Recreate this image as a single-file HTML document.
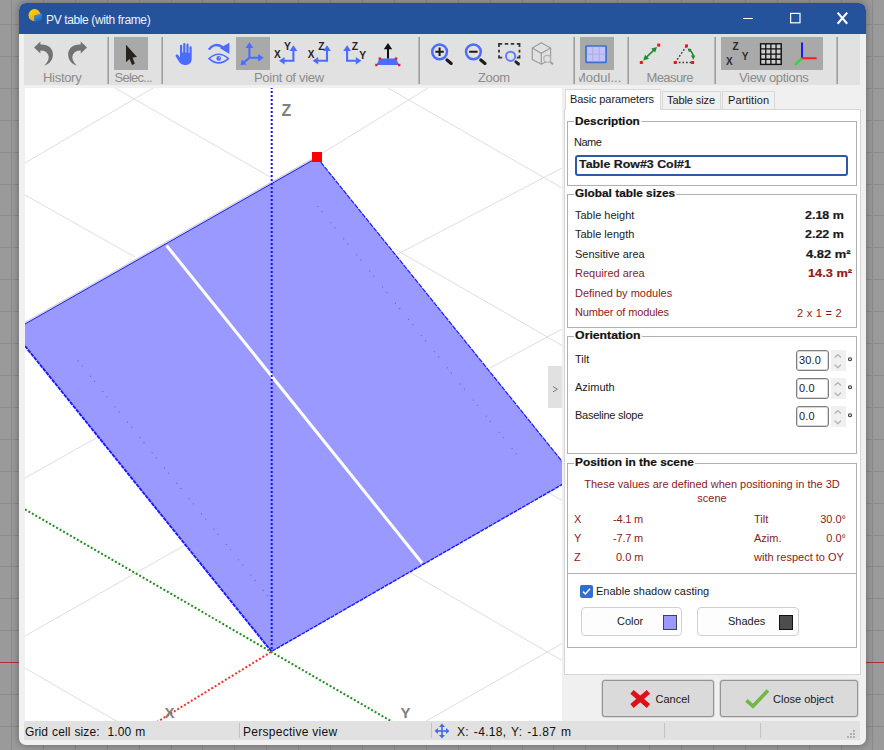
<!DOCTYPE html>
<html>
<head>
<meta charset="utf-8">
<title>PV table (with frame)</title>
<style>
*{box-sizing:border-box;margin:0;padding:0}
html,body{width:884px;height:750px;overflow:hidden}
body{position:relative;background:#9a9a9a;font-family:"Liberation Sans",sans-serif;font-size:11px;color:#1a1a1a}
.abs{position:absolute}
#bggrid{position:absolute;left:0;top:0;width:884px;height:750px}
#win{position:absolute;left:19px;top:3px;width:847px;height:742px;background:#f0f0f0;border-radius:7px;overflow:hidden;box-shadow:0 0 7px 1px rgba(0,0,0,.28)}
#w{position:absolute;left:-19px;top:-3px;width:884px;height:750px}
#title{position:absolute;left:19px;top:3px;width:847px;height:31px;background:#25539b}
#title .t{position:absolute;left:27px;top:10px;color:#eef2fb;font-size:12px;line-height:14px;white-space:nowrap;letter-spacing:-0.37px}
#tb{position:absolute;left:24px;top:34px;width:836px;height:51px;background:#e1e1e1}
.sep{position:absolute;top:3px;width:2px;height:47px;border-left:1px solid #b9b9b9;border-right:1px solid #9e9e9e}
.act{position:absolute;top:3px;height:33px;background:#a9a9a9}
.lbl{position:absolute;top:36px;font-size:13px;color:#8c8c8c;white-space:nowrap;text-align:center;letter-spacing:-0.1px}
.ico{position:absolute}
#cv{position:absolute;left:25px;top:88px;width:537px;height:633px;background:#fff;overflow:hidden}
#status{position:absolute;left:24px;top:721px;width:836px;height:19px;background:#e1e1e1}
#status span{position:absolute;top:4px;line-height:14px;font-size:12px;color:#111;white-space:nowrap}
#status i{position:absolute;top:2px;width:1px;height:15px;background:#c2c2c2}
/* right panel */
#rp{position:absolute;left:564px;top:109px;width:297px;height:566px;background:#fff;border:1px solid #d6d6d6}
.tab{position:absolute;height:18px;background:#f0f0f0;border:1px solid #d9d9d9;border-bottom:none;font-size:11px;line-height:13px;white-space:nowrap;padding:2px 0 0 4px;letter-spacing:-0.1px}
.tab.on{background:#fff;height:21px;z-index:2;padding-top:3px}
.grp{position:absolute;left:567px;width:290px;border:1px solid #b0b0b0}
.gl{position:absolute;background:#fff;font-weight:bold;-webkit-text-stroke:.2px currentColor;transform-origin:0 50%;font-size:11px;line-height:13px;white-space:nowrap;padding:0 1px;color:#111}
.tx{position:absolute;white-space:nowrap;font-size:11px;line-height:13px;color:#1a1a1a}
.b{font-weight:bold;-webkit-text-stroke:.2px currentColor;transform-origin:0 50%}
.r{color:#8b1a1a}
.spin{position:absolute;left:796px;width:33px;height:21px;border:1px solid #7e7e7e;box-shadow:inset 0 0 0 1px rgba(125,125,125,.3);border-radius:3px;background:#fff;font-size:11px;line-height:13px;padding:3px 0 0 2px;letter-spacing:.15px}
.btn{position:absolute;border:1px solid #949494;box-shadow:0 0 0 .5px rgba(140,140,140,.5);border-radius:3px;background:#dadada}
.wbtn{position:absolute;border:1px solid #d0d0d0;border-radius:4px;background:#fdfdfd}
</style>
</head>
<body>
<svg id="bggrid" viewBox="0 0 884 750" shape-rendering="crispEdges">
<g stroke="#8b8b8b" stroke-width="1">
<line x1="11.5" y1="0" x2="11.5" y2="750"/>
<line x1="43.5" y1="0" x2="43.5" y2="750"/>
<line x1="75.5" y1="0" x2="75.5" y2="750"/>
<line x1="107.5" y1="0" x2="107.5" y2="750"/>
<line x1="139.5" y1="0" x2="139.5" y2="750"/>
<line x1="171.5" y1="0" x2="171.5" y2="750"/>
<line x1="202.5" y1="0" x2="202.5" y2="750"/>
<line x1="234.5" y1="0" x2="234.5" y2="750"/>
<line x1="266.5" y1="0" x2="266.5" y2="750"/>
<line x1="298.5" y1="0" x2="298.5" y2="750"/>
<line x1="330.5" y1="0" x2="330.5" y2="750"/>
<line x1="362.5" y1="0" x2="362.5" y2="750"/>
<line x1="394.5" y1="0" x2="394.5" y2="750"/>
<line x1="426.5" y1="0" x2="426.5" y2="750"/>
<line x1="458.5" y1="0" x2="458.5" y2="750"/>
<line x1="490.5" y1="0" x2="490.5" y2="750"/>
<line x1="522.5" y1="0" x2="522.5" y2="750"/>
<line x1="553.5" y1="0" x2="553.5" y2="750"/>
<line x1="585.5" y1="0" x2="585.5" y2="750"/>
<line x1="617.5" y1="0" x2="617.5" y2="750"/>
<line x1="649.5" y1="0" x2="649.5" y2="750"/>
<line x1="681.5" y1="0" x2="681.5" y2="750"/>
<line x1="713.5" y1="0" x2="713.5" y2="750"/>
<line x1="745.5" y1="0" x2="745.5" y2="750"/>
<line x1="777.5" y1="0" x2="777.5" y2="750"/>
<line x1="809.5" y1="0" x2="809.5" y2="750"/>
<line x1="841.5" y1="0" x2="841.5" y2="750"/>
<line x1="872.5" y1="0" x2="872.5" y2="750"/>
<line x1="0" y1="24.5" x2="884" y2="24.5"/>
<line x1="0" y1="56.5" x2="884" y2="56.5"/>
<line x1="0" y1="88.5" x2="884" y2="88.5"/>
<line x1="0" y1="120.5" x2="884" y2="120.5"/>
<line x1="0" y1="152.5" x2="884" y2="152.5"/>
<line x1="0" y1="184.5" x2="884" y2="184.5"/>
<line x1="0" y1="215.5" x2="884" y2="215.5"/>
<line x1="0" y1="247.5" x2="884" y2="247.5"/>
<line x1="0" y1="279.5" x2="884" y2="279.5"/>
<line x1="0" y1="311.5" x2="884" y2="311.5"/>
<line x1="0" y1="343.5" x2="884" y2="343.5"/>
<line x1="0" y1="375.5" x2="884" y2="375.5"/>
<line x1="0" y1="407.5" x2="884" y2="407.5"/>
<line x1="0" y1="439.5" x2="884" y2="439.5"/>
<line x1="0" y1="471.5" x2="884" y2="471.5"/>
<line x1="0" y1="503.5" x2="884" y2="503.5"/>
<line x1="0" y1="535.5" x2="884" y2="535.5"/>
<line x1="0" y1="566.5" x2="884" y2="566.5"/>
<line x1="0" y1="598.5" x2="884" y2="598.5"/>
<line x1="0" y1="630.5" x2="884" y2="630.5"/>
<line x1="0" y1="694.5" x2="884" y2="694.5"/>
<line x1="0" y1="726.5" x2="884" y2="726.5"/>
</g>
<line x1="0" y1="662.5" x2="884" y2="662.5" stroke="#b03030" stroke-width="1"/>
</svg>
<div id="win"><div id="w">
<div id="title"><span class="t">PV table (with frame)</span>
<svg class="ico" width="847" height="31" viewBox="19 3 847 31" style="left:0;top:0">
<defs><linearGradient id="sun" x1="0" y1="0" x2="0.6" y2="1"><stop offset="0" stop-color="#ffe000"/><stop offset="1" stop-color="#f79a1a"/></linearGradient>
<linearGradient id="pvb" x1="0" y1="0" x2="0.3" y2="1"><stop offset="0" stop-color="#3aa0e6"/><stop offset="1" stop-color="#1c66b8"/></linearGradient></defs>
<circle cx="34.6" cy="15.2" r="6.1" fill="url(#sun)"/>
<path d="M34.2 15.4 L41.8 13.6 L41.8 20.2 L34.2 22 Z" fill="url(#pvb)"/>
<path d="M743 18.5 H753" stroke="#fff" stroke-width="1.2"/>
<rect x="790.6" y="13.4" width="9.4" height="9.4" fill="none" stroke="#fff" stroke-width="1.2"/>
<path d="M837.6 12.6 L847.2 23.8 M847.2 12.6 L837.6 23.8" stroke="#fff" stroke-width="2.1" fill="none"/>
</svg>

</div>
<div id="tb">
<div class="sep" style="left:83px"></div>
<div class="sep" style="left:137px"></div>
<div class="sep" style="left:394px"></div>
<div class="sep" style="left:549px"></div>
<div class="sep" style="left:603px"></div>
<div class="sep" style="left:690px"></div>
<div class="sep" style="left:812px"></div>
<div class="act" style="left:90px;width:34px"></div>
<div class="act" style="left:212px;width:34px"></div>
<div class="act" style="left:556px;width:34px"></div>
<div class="act" style="left:697px;width:102px"></div>
<div class="lbl" style="left:19px;letter-spacing:-.3px">History</div>
<div class="lbl" style="left:90.5px;letter-spacing:-.75px">Selec...</div>
<div class="lbl" style="left:230px;letter-spacing:-.3px">Point of view</div>
<div class="lbl" style="left:454px;letter-spacing:-.35px">Zoom</div>
<div class="lbl" style="left:554.5px;width:50px;overflow:hidden;text-align:left;letter-spacing:0"><span style="margin-left:-3.5px">Modul...</span></div>
<div class="lbl" style="left:622.5px;letter-spacing:-.6px">Measure</div>
<div class="lbl" style="left:715px;letter-spacing:-.33px">View options</div>
<svg class="ico" width="836" height="52" viewBox="24 34 836 52" style="left:0;top:0">
<!-- undo / redo -->
<path id="undo" d="M34.1 47.6 L40.4 41.6 L40.4 44.6 C48.5 44.2 53.4 49 52.9 55.4 C52.5 60.4 49 64.2 44 65.6 C48 62.2 49.7 58 48.1 54.4 C46.7 51.4 44 50.3 40.4 50.4 L40.4 53.6 Z" fill="#727272"/>
<use href="#undo" transform="translate(121.1 0) scale(-1 1)"/>
<!-- select cursor -->
<path d="M126 44.8 L126 62.3 L129.6 59 L132 64.9 L134.8 63.8 L132.6 57.6 L137 57 Z" fill="#27231c"/>
<!-- hand -->
<path fill="#4a6cff" d="M180 55 L180 46 Q180 44.7 181.1 44.7 Q182.2 44.7 182.2 46 L182.2 52.5 L183.2 52.5 L183.2 44.2 Q183.2 42.9 184.3 42.9 Q185.4 42.9 185.4 44.2 L185.4 52.5 L186.4 52.5 L186.4 44.9 Q186.4 43.6 187.5 43.6 Q188.6 43.6 188.6 44.9 L188.6 53 L189.5 53 L189.5 47.5 Q189.5 46.2 190.6 46.2 Q191.7 46.2 191.7 47.5 L191.7 58.5 Q191.7 65 185.8 65 L184.2 65 Q181.2 65 179.4 62.2 L175.8 56.4 Q175.2 55.2 176.2 54.6 Q177.4 54 178.4 55.2 L180 57.6 Z"/>
<!-- eye rotate -->
<g fill="none" stroke="#4a6cff">
<path d="M209 58.6 Q218.7 50 228.4 58.6 Q218.7 67.2 209 58.6 Z" stroke-width="1.5"/>
<path d="M208.9 49.7 C211.6 45.4 216.4 43.3 222.6 47" stroke-width="2.5"/>
</g>
<circle cx="218.7" cy="58.4" r="2.3" fill="#4a6cff"/><circle cx="219.5" cy="57.6" r=".7" fill="#e1e1e1"/>
<path d="M229.4 42.8 L229.4 54 L219.8 48 Z" fill="#4a6cff"/>
<!-- 3d axes -->
<g stroke="#4a6cff" stroke-width="2.1" fill="none">
<line x1="249.4" y1="58" x2="249.4" y2="46.5"/><line x1="249.4" y1="57.8" x2="259.5" y2="57.8"/><line x1="249.4" y1="57.8" x2="243.6" y2="62.6"/>
</g>
<g fill="#4a6cff">
<path d="M249.4 42.3 L253.3 47.9 L245.5 47.9 Z"/><path d="M263.7 57.8 L258.2 54 L258.2 61.6 Z"/><path d="M240.6 65 L241.8 59.4 L246.6 64.4 Z"/>
</g>
<!-- xY, xZ, ZY -->
<g id="ar1" stroke="#4a6cff" stroke-width="2.1" fill="#4a6cff">
<path d="M293.4 50 L293.4 60.7 L284 60.7" fill="none"/>
<path d="M293.4 45.3 L297.3 50.9 L289.5 50.9 Z" stroke="none"/>
<path d="M279 60.7 L284.6 57 L284.6 64.4 Z" stroke="none"/>
</g>
<use href="#ar1" x="33.6"/>
<g stroke="#4a6cff" stroke-width="2.1" fill="#4a6cff">
<path d="M347.1 50 L347.1 60.7 L356.4 60.7" fill="none"/>
<path d="M347.1 45.3 L351 50.9 L343.2 50.9 Z" stroke="none"/>
<path d="M361.4 60.7 L355.8 57 L355.8 64.4 Z" stroke="none"/>
</g>
<g font-family="Liberation Sans, sans-serif" font-weight="bold" font-size="10.3" fill="#242424">
<text x="274.1" y="58" font-size="10">X</text><text x="284.1" y="49.8">Y</text>
<text x="307.7" y="58" font-size="10">X</text><text x="318.2" y="49.8">Z</text>
<text x="351.8" y="49.8">Z</text><text x="359.2" y="58.8">Y</text>
</g>
<!-- table up -->
<path d="M379.6 58.6 L396 58.6 L399.2 65 L376.4 65 Z" fill="#4a6cff"/>
<path d="M388 43 L392.2 49.2 L389 49.2 L389 58.6 L387 58.6 L387 49.2 L383.8 49.2 Z" fill="#111"/>
<g fill="#f01818"><rect x="378.6" y="57.4" width="2.4" height="2.4"/><rect x="394.8" y="57.4" width="2.4" height="2.4"/><rect x="375.2" y="63.8" width="2.4" height="2.4"/><rect x="398" y="63.8" width="2.4" height="2.4"/></g>
<!-- zoom in/out -->
<g fill="none">
<circle cx="439.6" cy="51.8" r="7.4" stroke="#4d6dff" stroke-width="2.5"/>
<line x1="447" y1="60" x2="451.2" y2="63.4" stroke="#1f1c18" stroke-width="3.2" stroke-linecap="round"/>
<path d="M435.4 51.8 H443.8 M439.6 47.6 V56" stroke="#1a1a1a" stroke-width="2"/>
<circle cx="473.4" cy="51.8" r="7.4" stroke="#4d6dff" stroke-width="2.5"/>
<line x1="480.8" y1="60" x2="485" y2="63.4" stroke="#1f1c18" stroke-width="3.2" stroke-linecap="round"/>
<path d="M469.2 51.8 H477.6" stroke="#1a1a1a" stroke-width="2"/>
</g>
<!-- zoom region -->
<path d="M499 47 V43.8 H502.2 M504.8 43.8 H508.2 M510.8 43.8 H514.2 M516.8 43.8 H519.5 V47 M519.5 49.8 V52.6 M519.5 55.2 V57.6 H516.8 M499 49.8 V52.6 M499 55.2 V57.6 H502.2" fill="none" stroke="#333" stroke-width="1.8"/>
<circle cx="510.6" cy="56.3" r="4.6" fill="#e1e1e1" stroke="#5f7dff" stroke-width="2"/>
<line x1="515.9" y1="61.9" x2="518.5" y2="64" stroke="#262320" stroke-width="3" stroke-linecap="round"/>
<!-- 3d cube zoom (disabled) -->
<g fill="none" stroke="#9c9c9c" stroke-width="1.2">
<path d="M541.3 42.8 L550.6 48.1 L550.6 59.6 L541.3 64.2 L532.3 59.6 L532.3 48.1 Z"/>
<path d="M532.3 48.1 L541.3 53.3 L550.6 48.1 M541.3 53.3 L541.3 64.2"/>
<circle cx="547.2" cy="58.8" r="3.5" fill="#e1e1e1" stroke="#b4b4b4"/>
<line x1="550" y1="61.6" x2="553" y2="64.2" stroke-width="1.8"/>
</g>
<!-- module -->
<rect x="586" y="46" width="20.1" height="16.4" rx=".6" fill="#c2c2ff" stroke="#3f6ed2" stroke-width="1.7"/>
<path d="M592.7 46.8 V61.6 M599.3 46.8 V61.6 M586.8 54.2 H605.4" stroke="#aeaed8" stroke-width="1" fill="none"/>
<!-- measure 1 -->
<g fill="#ff1010"><rect x="639.8" y="61" width="3" height="3"/><rect x="657.2" y="43.6" width="3" height="3"/></g>
<line x1="645.6" y1="58" x2="654.6" y2="49.4" stroke="#228b2c" stroke-width="1.7"/>
<path d="M643.2 60.4 L645 54.8 L649 58.8 Z M657 47 L655.2 52.6 L651.2 48.6 Z" fill="#228b2c"/>
<!-- measure 2 -->
<path d="M675.2 62.5 L686.5 46 M675.2 62.5 H692.6" fill="none" stroke="#3c3c3c" stroke-width="1.5" stroke-dasharray="1.7 1.9"/>
<g fill="#ff1010"><rect x="673.7" y="61" width="3" height="3"/><rect x="691.1" y="61" width="3" height="3"/><rect x="685" y="44.4" width="3" height="3"/></g>
<path d="M689 49.6 Q693.4 52.6 693.2 57" fill="none" stroke="#228b2c" stroke-width="1.7"/>
<path d="M687.6 48.4 L691.8 49 L689 52.2 Z M693.2 59.8 L691 55.4 L695.4 55.6 Z" fill="#228b2c"/>
<!-- view options -->
<g font-family="Liberation Sans, sans-serif" font-weight="bold" font-size="10" fill="#2c2c2c">
<text x="732.4" y="49.6">Z</text><text x="726" y="64.8">X</text><text x="741.8" y="60">Y</text>
</g>
<rect x="760.6" y="43.8" width="20.6" height="20.6" fill="#cdcdcd" stroke="#111" stroke-width="1.4"/>
<path d="M765.75 43.8 V64.4 M770.9 43.8 V64.4 M776.05 43.8 V64.4 M760.6 48.95 H781.2 M760.6 54.1 H781.2 M760.6 59.25 H781.2" stroke="#111" stroke-width="1.3" fill="none"/>
<line x1="802" y1="42.4" x2="802" y2="58.4" stroke="#1a1aff" stroke-width="2"/>
<line x1="802" y1="58.2" x2="816.6" y2="58.2" stroke="#ff1a1a" stroke-width="2"/>
<line x1="802" y1="58.2" x2="795" y2="65" stroke="#22dd22" stroke-width="2"/>
</svg>

</div>
<div id="cv">
<svg width="538" height="634" viewBox="25 88 538 634" style="position:absolute;left:0;top:0">
<g stroke="#dedede" stroke-width="1" fill="none">
<line x1="25" y1="163" x2="153" y2="88"/>
<line x1="25" y1="322.5" x2="317" y2="156.5"/>
<line x1="317" y1="156.5" x2="428" y2="88"/>
<line x1="25" y1="478" x2="98" y2="437"/>
<line x1="396" y1="255" x2="563" y2="167.5"/>
<line x1="25" y1="636" x2="185" y2="545"/>
<line x1="490" y1="368" x2="563" y2="328.5"/>
<line x1="424.5" y1="722" x2="563" y2="643"/>
<line x1="388" y1="88" x2="563" y2="188.5"/>
<line x1="115" y1="88" x2="272" y2="178"/>
<line x1="393" y1="248" x2="563" y2="346"/>
<line x1="25" y1="195" x2="135" y2="257"/>
<line x1="546" y1="491" x2="563" y2="501"/>
<line x1="25" y1="350" x2="31" y2="353.5"/>
<line x1="411" y1="573" x2="563" y2="661"/>
<line x1="25" y1="668" x2="118" y2="722"/>
</g>
<polygon points="25,324 317,157.5 563,462.5 563,484 271.5,651.5 25,346" fill="#9999ff"/>
<line x1="25" y1="322.4" x2="317" y2="156.2" stroke="#d4d4d4" stroke-width="1.2"/>
<g fill="none" stroke="#1a1aff">
<line x1="25" y1="324" x2="317" y2="157.8" stroke-width="1"/>
<line x1="317" y1="157.5" x2="563" y2="462.5" stroke-width="1.2" stroke-dasharray="5 1"/>
<line x1="563" y1="484" x2="271.5" y2="651.5" stroke-width="1.4" stroke-dasharray="4 0.8"/>
<line x1="271.5" y1="651.5" x2="25" y2="346" stroke-width="1.9" stroke-dasharray="4 0.8"/>
</g>
<line x1="166.5" y1="245.5" x2="422" y2="563" stroke="#fff" stroke-width="3"/>
<g fill="#5a5aff">
<rect x="317.3" y="206.0" width="1" height="1"/>
<rect x="321.5" y="211.2" width="1" height="1"/>
<rect x="330.3" y="222.1" width="1" height="1"/>
<rect x="334.5" y="227.3" width="1" height="1"/>
<rect x="343.2" y="238.3" width="1" height="1"/>
<rect x="347.4" y="243.5" width="1" height="1"/>
<rect x="356.2" y="254.4" width="1" height="1"/>
<rect x="360.4" y="259.6" width="1" height="1"/>
<rect x="369.1" y="270.5" width="1" height="1"/>
<rect x="373.3" y="275.7" width="1" height="1"/>
<rect x="382.1" y="286.7" width="1" height="1"/>
<rect x="386.3" y="291.9" width="1" height="1"/>
<rect x="395.0" y="302.8" width="1" height="1"/>
<rect x="399.2" y="308.0" width="1" height="1"/>
<rect x="408.0" y="318.9" width="1" height="1"/>
<rect x="412.2" y="324.1" width="1" height="1"/>
<rect x="420.9" y="335.1" width="1" height="1"/>
<rect x="425.1" y="340.3" width="1" height="1"/>
<rect x="433.9" y="351.2" width="1" height="1"/>
<rect x="438.1" y="356.4" width="1" height="1"/>
<rect x="446.8" y="367.3" width="1" height="1"/>
<rect x="451.0" y="372.5" width="1" height="1"/>
<rect x="459.8" y="383.5" width="1" height="1"/>
<rect x="464.0" y="388.7" width="1" height="1"/>
<rect x="472.7" y="399.6" width="1" height="1"/>
<rect x="476.9" y="404.8" width="1" height="1"/>
<rect x="485.7" y="415.7" width="1" height="1"/>
<rect x="489.9" y="420.9" width="1" height="1"/>
<rect x="498.6" y="431.9" width="1" height="1"/>
<rect x="502.8" y="437.1" width="1" height="1"/>
<rect x="511.6" y="448.0" width="1" height="1"/>
<rect x="515.8" y="453.2" width="1" height="1"/>
<rect x="77.6" y="360.4" width="1" height="1"/>
<rect x="81.8" y="365.6" width="1" height="1"/>
<rect x="89.9" y="375.7" width="1" height="1"/>
<rect x="94.1" y="380.9" width="1" height="1"/>
<rect x="102.3" y="391.0" width="1" height="1"/>
<rect x="106.5" y="396.2" width="1" height="1"/>
<rect x="114.6" y="406.3" width="1" height="1"/>
<rect x="118.8" y="411.5" width="1" height="1"/>
<rect x="127.0" y="421.6" width="1" height="1"/>
<rect x="131.2" y="426.8" width="1" height="1"/>
<rect x="139.3" y="436.9" width="1" height="1"/>
<rect x="143.5" y="442.1" width="1" height="1"/>
<rect x="151.6" y="452.2" width="1" height="1"/>
<rect x="155.8" y="457.4" width="1" height="1"/>
<rect x="164.0" y="467.5" width="1" height="1"/>
<rect x="168.2" y="472.7" width="1" height="1"/>
<rect x="176.3" y="482.8" width="1" height="1"/>
<rect x="180.5" y="488.0" width="1" height="1"/>
<rect x="188.7" y="498.1" width="1" height="1"/>
<rect x="192.9" y="503.3" width="1" height="1"/>
<rect x="201.0" y="513.4" width="1" height="1"/>
<rect x="205.2" y="518.6" width="1" height="1"/>
<rect x="213.3" y="528.7" width="1" height="1"/>
<rect x="217.5" y="533.9" width="1" height="1"/>
<rect x="225.7" y="544.0" width="1" height="1"/>
<rect x="229.9" y="549.2" width="1" height="1"/>
<rect x="238.0" y="559.3" width="1" height="1"/>
<rect x="242.2" y="564.5" width="1" height="1"/>
<rect x="250.4" y="574.6" width="1" height="1"/>
<rect x="254.6" y="579.8" width="1" height="1"/>
<rect x="262.7" y="589.9" width="1" height="1"/>
<rect x="266.9" y="595.1" width="1" height="1"/>
</g>
<line x1="271.7" y1="87" x2="271.7" y2="651" stroke="#1414ff" stroke-width="2" stroke-dasharray="2 2"/>
<line x1="25" y1="509.3" x2="392.5" y2="722" stroke="#218c21" stroke-width="2" stroke-dasharray="2 2"/>
<line x1="271" y1="652" x2="157" y2="722" stroke="#ff2a2a" stroke-width="2" stroke-dasharray="2 2"/>
<rect x="312" y="152" width="10" height="10" fill="#ff0000"/>
<g font-family="Liberation Sans, sans-serif" font-weight="bold" fill="#808080" font-size="14.5">
<text x="281.6" y="116.2" font-size="16">Z</text>
<text x="164.5" y="718" font-size="15">X</text>
<text x="400.5" y="717.5" font-size="15">Y</text>
</g>
<rect x="548" y="366" width="15" height="42" fill="#e1e1e1"/>
<path d="M553 386.6 L557.4 389.2 L553 391.8" fill="none" stroke="#7a7a7a" stroke-width="1"/>
</svg>
</div>
<!-- tabs -->
<div class="tab on" style="left:565px;top:89px;width:96px">Basic parameters</div>
<div class="tab" style="left:662px;top:91px;width:59px">Table size</div>
<div class="tab" style="left:722px;top:91px;width:53px;letter-spacing:.1px;padding-left:5px">Partition</div>
<div id="rp"></div>
<!-- Description -->
<div class="grp" style="top:121px;height:65px"></div>
<div class="gl" style="left:574px;top:115px;transform:scaleX(1.069)">Description</div>
<div class="tx" style="left:574px;top:136px;letter-spacing:-.5px">Name</div>
<div class="abs" style="left:575px;top:155px;width:273px;height:21px;border:2px solid #2c5aa6;border-radius:3px;background:#fff"></div>
<div class="tx b" style="left:578.5px;top:158px;transform:scaleX(1.125)">Table Row#3 Col#1</div>
<!-- Global table sizes -->
<div class="grp" style="top:194px;height:134px"></div>
<div class="gl" style="left:574px;top:187px;transform:scaleX(1.076)">Global table sizes</div>
<div class="tx" style="left:575px;top:209px">Table height</div>
<div class="tx b" style="left:805px;top:209px;transform:scaleX(1.136)">2.18 m</div>
<div class="tx" style="left:575px;top:228px">Table length</div>
<div class="tx b" style="left:805px;top:228px;transform:scaleX(1.136)">2.22 m</div>
<div class="tx" style="left:575px;top:248px">Sensitive area</div>
<div class="tx b" style="left:806px;top:248px;transform:scaleX(1.174)">4.82 m²</div>
<div class="tx r" style="left:575px;top:267px">Required area</div>
<div class="tx b r" style="left:807.5px;top:267px;transform:scaleX(1.163)">14.3 m²</div>
<div class="tx r" style="left:575px;top:287px">Defined by modules</div>
<div class="tx r" style="left:575px;top:306px;letter-spacing:-.12px">Number of modules</div>
<div class="tx r" style="left:797px;top:307px;letter-spacing:.28px">2 x 1 = 2</div>
<!-- Orientation -->
<div class="grp" style="top:336px;height:118px"></div>
<div class="gl" style="left:574px;top:329px;transform:scaleX(1.113)">Orientation</div>
<div class="tx" style="left:575px;top:353px">Tilt</div>
<div class="tx" style="left:575px;top:381px">Azimuth</div>
<div class="tx" style="left:575px;top:409px;letter-spacing:-.25px">Baseline slope</div>
<div class="spin" style="top:350px">30.0</div>
<div class="spin" style="top:378px">0.0</div>
<div class="spin" style="top:406px">0.0</div>
<svg class="ico" width="26" height="82" viewBox="830 348 26 82" style="left:830px;top:348px">
<g id="sp1"><rect x="831" y="350" width="15" height="21" fill="#f0f0f0"/>
<path d="M834.6 357.6 L837.8 354.6 L841 357.6 M834.6 364.6 L837.8 367.6 L841 364.6" fill="none" stroke="#adadad" stroke-width="1.3"/>
<circle cx="850" cy="359.2" r="1.5" fill="none" stroke="#333" stroke-width="1.15"/></g>
<use href="#sp1" y="28"/><use href="#sp1" y="56"/>
</svg>

<!-- Position -->
<div class="grp" style="top:463px;height:111px"></div>
<div class="gl" style="left:574px;top:456px;transform:scaleX(1.079)">Position in the scene</div>
<div class="tx r" style="left:567px;top:477px;width:290px;text-align:center;white-space:normal;line-height:14px">These values are defined when positioning in the 3D<br>scene</div>
<div class="tx r" style="left:574px;top:513px">X</div>
<div class="tx r" style="left:613px;top:513px;letter-spacing:-.2px">-4.1 m</div>
<div class="tx r" style="left:574px;top:532px">Y</div>
<div class="tx r" style="left:613px;top:532px;letter-spacing:-.2px">-7.7 m</div>
<div class="tx r" style="left:574px;top:551px">Z</div>
<div class="tx r" style="left:616px;top:551px">0.0 m</div>
<div class="tx r" style="left:754px;top:513px">Tilt</div>
<div class="tx r" style="left:754px;top:532px">Azim.</div>
<div class="tx r" style="left:754px;top:551px">with respect to OY</div>
<div class="tx r" style="left:786px;top:513px;width:60px;text-align:right">30.0°</div>
<div class="tx r" style="left:786px;top:532px;width:60px;text-align:right">0.0°</div>
<!-- shadow box -->
<div class="grp" style="top:573px;height:75px"></div>
<div class="abs" style="left:580px;top:585px;width:13px;height:13px;background:#2f6fd0;border-radius:2px"><svg width="13" height="13" viewBox="0 0 13 13" style="position:absolute;left:0;top:0"><path d="M3 6.6 L5.4 9 L10 3.8" fill="none" stroke="#fff" stroke-width="1.5"/></svg></div>
<div class="tx" style="left:596px;top:585px">Enable shadow casting</div>
<div class="wbtn" style="left:581px;top:607px;width:101px;height:29px"></div>
<div class="tx" style="left:617px;top:615px">Color</div>
<div class="abs" style="left:663px;top:615px;width:14px;height:15px;background:#9999ff;border:1px solid #444"></div>
<div class="wbtn" style="left:697px;top:607px;width:102px;height:29px"></div>
<div class="tx" style="left:728px;top:615px">Shades</div>
<div class="abs" style="left:779px;top:615px;width:14px;height:15px;background:#4d4d4d;border:1px solid #111"></div>
<!-- bottom buttons -->
<div class="btn" style="left:602px;top:680px;width:112px;height:37px"></div>
<div class="tx" style="left:655.5px;top:693px">Cancel</div>
<div class="btn" style="left:720px;top:680px;width:138px;height:37px"></div>
<div class="tx" style="left:773px;top:693px">Close object</div>
<svg class="ico" width="150" height="24" viewBox="628 686 150 24" style="left:628px;top:686px">
<path d="M632 691.8 L648.4 706 M648.4 691.8 L632 706" stroke="#e01018" stroke-width="5" fill="none"/>
<path d="M746.4 700.4 L753 706.2 L768 690.4" stroke="#72b944" stroke-width="3.6" fill="none"/>
</svg>


<div id="status">
<span style="left:1px;letter-spacing:.1px;word-spacing:.55px">Grid cell size:&nbsp; 1.00 m</span>
<span style="left:219px;letter-spacing:.27px">Perspective view</span>
<span style="left:433px;letter-spacing:.3px;word-spacing:1.3px">X: -4.18, Y: -1.87 m</span>
<i style="left:215px"></i><i style="left:407px"></i><i style="left:640px"></i><i style="left:736px"></i>
<svg class="ico" width="836" height="18" viewBox="24 721 836 18" style="left:0;top:0">
<g fill="#3f6fe0"><path d="M442 723.6 L445 727 L439 727 Z M442 738.4 L445 735 L439 735 Z M434.6 731 L438 728 L438 734 Z M449.4 731 L446 728 L446 734 Z"/><rect x="441.2" y="726" width="1.6" height="10"/><rect x="437" y="730.2" width="10" height="1.6"/></g>
<g fill="#b0b0b0"><rect x="853" y="730" width="2" height="2"/><rect x="853" y="733" width="2" height="2"/><rect x="853" y="736" width="2" height="2"/><rect x="850" y="733" width="2" height="2"/><rect x="850" y="736" width="2" height="2"/><rect x="847" y="736" width="2" height="2"/></g>
</svg>

</div>
</div></div>
</body>
</html>
